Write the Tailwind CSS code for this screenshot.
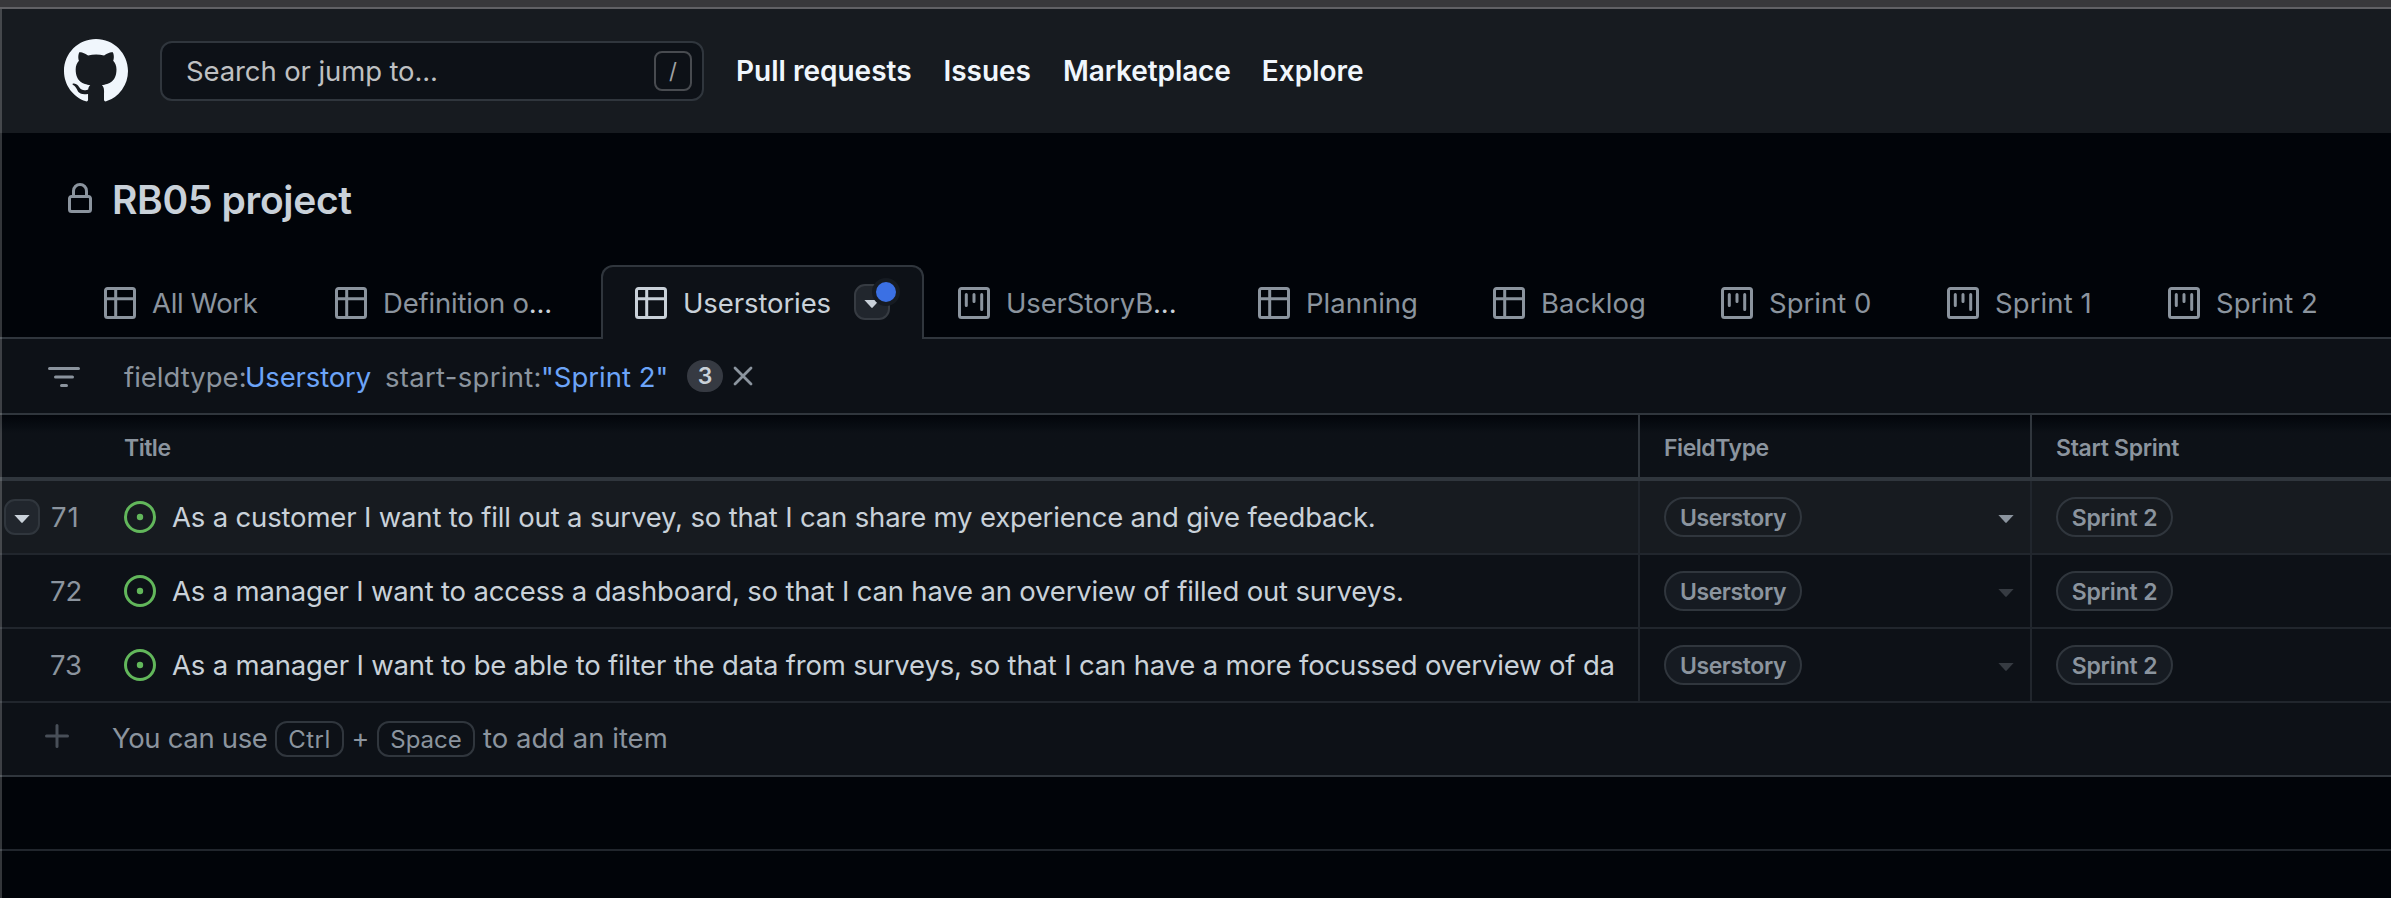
<!DOCTYPE html>
<html lang="en">
<head>
<meta charset="utf-8">
<title>RB05 project</title>
<script src="https://cdn.jsdelivr.net/npm/@tailwindcss/browser@4"></script>
</head>
<body class="relative w-[2391px] h-[898px] overflow-hidden bg-[#010409] font-['Inter','Liberation_Sans',sans-serif] text-[27.5px] leading-[40px] text-[#c9d1d9] whitespace-nowrap">
<svg class="hidden">
  <symbol id="table" viewBox="0 0 32 32"><path d="M3.5 1.5h25a2 2 0 0 1 2 2v25a2 2 0 0 1-2 2h-25a2 2 0 0 1-2-2v-25a2 2 0 0 1 2-2zM1.5 11.7h29M11.7 1.5v29" fill="none" stroke="currentColor" stroke-width="3"/></symbol>
  <symbol id="board" viewBox="0 0 32 32"><path d="M3.5 1.5h25a2 2 0 0 1 2 2v25a2 2 0 0 1-2 2h-25a2 2 0 0 1-2-2v-25a2 2 0 0 1 2-2zM8.3 7.5v11M16 7.5v7M23.7 7.5v15" fill="none" stroke="currentColor" stroke-width="3" stroke-linecap="round"/></symbol>
  <symbol id="issue" viewBox="0 0 32 32"><circle cx="16" cy="16" r="14.5" fill="none" stroke="currentColor" stroke-width="3"/><circle cx="16" cy="16" r="3.2" fill="currentColor"/></symbol>
  <symbol id="caret" viewBox="0 0 16 8"><path d="M.4 0h15.2L8.7 7.6a1 1 0 0 1-1.4 0z" fill="currentColor"/></symbol>
</svg>

<!-- window edge -->
<div class="h-[9px] bg-[#38383b] border-b-2 border-[#616165]"></div>
<div class="absolute left-0 top-[9px] bottom-0 w-[2px] bg-white/20 z-10"></div>

<header class="flex items-center h-[124px] pl-16 bg-[#171b20] text-[28px] font-semibold text-[#f0f6fc]">
  <svg class="w-16 h-16 shrink-0" viewBox="0 0 16 16" fill="currentColor"><path d="M8 0C3.58 0 0 3.58 0 8c0 3.54 2.29 6.53 5.47 7.59.4.07.55-.17.55-.38 0-.19-.01-.82-.01-1.49-2.01.37-2.53-.49-2.69-.94-.09-.23-.48-.94-.82-1.13-.28-.15-.68-.52-.01-.53.63-.01 1.08.58 1.23.82.72 1.21 1.87.87 2.33.66.07-.52.28-.87.51-1.07-1.78-.2-3.64-.89-3.64-3.95 0-.87.31-1.59.82-2.15-.08-.2-.36-1.02.08-2.12 0 0 .67-.21 2.2.82.64-.18 1.32-.27 2-.27.68 0 1.36.09 2 .27 1.53-1.04 2.2-.82 2.2-.82.44 1.1.16 1.92.08 2.12.51.56.82 1.27.82 2.15 0 3.07-1.87 3.75-3.65 3.95.29.25.54.73.54 1.48 0 1.07-.01 1.93-.01 2.2 0 .21.15.46.55.38A8.013 8.013 0 0016 8c0-4.42-3.58-8-8-8z"/></svg>
  <div class="flex items-center justify-between ml-8 w-[544px] h-[60px] rounded-xl border-2 border-[#30363d] bg-[#0d1117] pl-6 pr-[10px] text-[27.5px] font-normal text-[#bfc0c2] tracking-[-0.11px]">
    <span>Search or jump to...</span>
    <span class="flex items-center justify-center w-[38px] h-10 rounded-lg border-2 border-[#484b50] text-[22px] text-[#a0a1a3]">/</span>
  </div>
  <nav class="flex ml-8 gap-8">
    <a>Pull requests</a><a class="tracking-[-0.04px]">Issues</a><a class="tracking-[-0.1px]">Marketplace</a><a class="-ml-[1px]">Explore</a>
  </nav>
</header>

<div class="flex items-center h-[132px] pl-16 gap-4 text-[39px] font-semibold tracking-[-0.33px]">
  <svg class="w-8 h-8 text-[#8b949e]" viewBox="0 0 16 16" fill="currentColor"><path d="M4 4a4 4 0 018 0v2h.25c.966 0 1.75.784 1.75 1.75v5.5A1.75 1.75 0 0112.25 15h-8.5A1.75 1.75 0 012 13.25v-5.5C2 6.784 2.784 6 3.75 6H4V4zm8.25 3.5h-8.5a.25.25 0 00-.25.25v5.5c0 .138.112.25.25.25h8.5a.25.25 0 00.25-.25v-5.5a.25.25 0 00-.25-.25zM10.5 6V4a2.5 2.5 0 10-5 0v2h5z"/></svg>
  <h1 class="pt-[2px]">RB05 project</h1>
</div>

<div class="flex h-[74px] text-[#8b949e]">
  <div class="w-[70px] border-b-2 border-[#30363d]"></div>
  <div class="flex items-center gap-4 w-[231px] pl-[34px] border-b-2 border-[#30363d] pt-[3px]"><svg class="w-8 h-8"><use href="#table"/></svg><span class="tracking-[-0.31px]">All Work</span></div>
  <div class="flex items-center gap-4 w-[300px] pl-[34px] border-b-2 border-[#30363d] pt-[3px]"><svg class="w-8 h-8"><use href="#table"/></svg><span class="tracking-[-0.2px]">Definition o<span class="text-[#c9d1d9]">...</span></span></div>
  <div class="flex items-center gap-4 w-[323px] pl-8 border-2 border-b-0 border-[#30363d] rounded-t-xl bg-[#0d1117] text-[#c9d1d9]"><svg class="w-8 h-8"><use href="#table"/></svg><span class="tracking-[-0.1px]">Userstories</span>
    <div class="relative flex items-center justify-center ml-[7px] -mt-[3px] w-9 h-9 rounded-[11px] border-2 border-[#363b42] bg-[#21262d]"><svg class="w-4 h-2 mt-1"><use href="#caret"/></svg><span class="absolute -top-2 left-4 w-7 h-7 rounded-full border-4 border-[#161b22] bg-[#3b70e4]"></span></div>
  </div>
  <div class="flex items-center gap-4 w-[300px] pl-[34px] border-b-2 border-[#30363d] pt-[3px]"><svg class="w-8 h-8"><use href="#board"/></svg><span class="tracking-[-0.15px]">UserStoryB<span class="text-[#c9d1d9]">...</span></span></div>
  <div class="flex items-center gap-4 w-[235px] pl-[34px] border-b-2 border-[#30363d] pt-[3px]"><svg class="w-8 h-8"><use href="#table"/></svg><span>Planning</span></div>
  <div class="flex items-center gap-4 w-[228px] pl-[34px] border-b-2 border-[#30363d] pt-[3px]"><svg class="w-8 h-8"><use href="#table"/></svg><span class="tracking-[0.1px]">Backlog</span></div>
  <div class="flex items-center gap-4 w-[226px] pl-[34px] border-b-2 border-[#30363d] pt-[3px]"><svg class="w-8 h-8"><use href="#board"/></svg><span>Sprint 0</span></div>
  <div class="flex items-center gap-4 w-[221px] pl-[34px] border-b-2 border-[#30363d] pt-[3px]"><svg class="w-8 h-8"><use href="#board"/></svg><span class="tracking-[0.1px]">Sprint 1</span></div>
  <div class="flex items-center gap-4 flex-1 pl-[34px] border-b-2 border-[#30363d] pt-[3px]"><svg class="w-8 h-8"><use href="#board"/></svg><span>Sprint 2</span></div>
</div>

<div class="flex items-center h-[76px] pl-12 bg-[#0d1117] border-b-2 border-[#30363d] text-[#8b949e]">
  <svg class="w-8 h-5 mt-[2px]" viewBox="0 0 32 20" fill="none" stroke="currentColor" stroke-width="3" stroke-linecap="round"><path d="M1.5 1.5h29M7.5 10h17M13.5 18.5h5"/></svg>
  <div class="flex ml-11 pt-[2px]">
    <div class="w-[117px]">fieldtype:</div>
    <div class="ml-[4px] w-[140px] text-[#6ca4f8] tracking-[-0.15px]">Userstory</div>
    <div class="w-[156px] tracking-[0.3px]">start-sprint:</div>
    <div class="w-[146px] text-[#6ca4f8]">"Sprint 2"</div>
  </div>
  <div class="flex items-center justify-center w-9 h-8 rounded-full bg-[#363a42] text-[23px] font-semibold text-[#c9d1d9]">3</div>
  <svg class="ml-[10px] w-5 h-5" viewBox="0 0 20 20" fill="none" stroke="currentColor" stroke-width="2.8" stroke-linecap="round"><path d="M2 2l16 16M18 2L2 18"/></svg>
</div>

<div class="grid grid-cols-[1640px_392px_1fr] h-[66px] border-b-4 border-[#30363d] bg-[#0d1117] bg-linear-to-b from-[#03060b] to-[#0d1117] to-[18px] text-[23px] font-semibold text-[#8b949e]">
  <div class="flex items-center pt-[3px] pl-[124px] border-r-2 border-[#30363d] tracking-[-0.5px]">Title</div>
  <div class="flex items-center pt-[3px] pl-6 border-r-2 border-[#30363d] tracking-[-0.45px]">FieldType</div>
  <div class="flex items-center pt-[3px] pl-6 tracking-[-0.3px]">Start Sprint</div>
</div>

<div class="grid grid-cols-[1640px_392px_1fr] h-[74px] border-b-2 border-[#21262d] bg-[#171b20]">
  <div class="flex items-center pl-1 pr-[23px] border-r-2 border-[#21262d]">
    <div class="flex items-center justify-center shrink-0 w-9 h-9 rounded-[11px] border-2 border-[#30363d] bg-[#21262d]"><svg class="w-4 h-2 mt-1"><use href="#caret"/></svg></div>
    <span class="shrink-0 w-[52px] ml-[10px] mr-[22px] pl-[1px] text-[#8b949e] tracking-[1px]">71</span>
    <svg class="shrink-0 w-8 h-8 text-[#62b75b]"><use href="#issue"/></svg>
    <span class="ml-4 tracking-[-0.17px] overflow-hidden">As a customer I want to fill out a survey, so that I can share my experience and give feedback.</span>
  </div>
  <div class="flex items-center justify-between pl-6 pr-4 border-r-2 border-[#21262d]">
    <span class="flex items-center justify-center w-[138px] h-10 pt-[1px] rounded-full border-2 border-[#30363d] text-[23px] font-semibold text-[#8b949e] tracking-[-0.4px]">Userstory</span>
    <svg class="w-4 h-2 mt-1 text-[#8b949e]"><use href="#caret"/></svg>
  </div>
  <div class="flex items-center pl-6"><span class="flex items-center justify-center w-[117px] h-10 pt-[1px] rounded-full border-2 border-[#30363d] text-[23px] font-semibold text-[#8b949e] tracking-[-0.16px]">Sprint 2</span></div>
</div>

<div class="grid grid-cols-[1640px_392px_1fr] h-[74px] border-b-2 border-[#21262d] bg-[#0d1117]">
  <div class="flex items-center pl-[50px] pr-[23px] border-r-2 border-[#21262d]">
    <span class="shrink-0 w-[52px] mr-[22px] text-[#8b949e]">72</span>
    <svg class="shrink-0 w-8 h-8 text-[#62b75b]"><use href="#issue"/></svg>
    <span class="ml-4 tracking-[-0.18px] overflow-hidden">As a manager I want to access a dashboard, so that I can have an overview of filled out surveys.</span>
  </div>
  <div class="flex items-center justify-between pl-6 pr-4 border-r-2 border-[#21262d]">
    <span class="flex items-center justify-center w-[138px] h-10 pt-[1px] rounded-full border-2 border-[#30363d] bg-[#161b22] text-[23px] font-semibold text-[#8b949e] tracking-[-0.4px]">Userstory</span>
    <svg class="w-4 h-2 mt-1 text-[#363b42]"><use href="#caret"/></svg>
  </div>
  <div class="flex items-center pl-6"><span class="flex items-center justify-center w-[117px] h-10 pt-[1px] rounded-full border-2 border-[#30363d] bg-[#161b22] text-[23px] font-semibold text-[#8b949e] tracking-[-0.16px]">Sprint 2</span></div>
</div>

<div class="grid grid-cols-[1640px_392px_1fr] h-[74px] border-b-2 border-[#21262d] bg-[#0d1117]">
  <div class="flex items-center min-w-0 pl-[50px] pr-[22px] border-r-2 border-[#21262d]">
    <span class="shrink-0 w-[52px] mr-[22px] text-[#8b949e]">73</span>
    <svg class="shrink-0 w-8 h-8 text-[#62b75b]"><use href="#issue"/></svg>
    <span class="ml-4 min-w-0 tracking-[-0.17px] overflow-hidden">As a manager I want to be able to filter the data from surveys, so that I can have a more focussed overview of da</span>
  </div>
  <div class="flex items-center justify-between pl-6 pr-4 border-r-2 border-[#21262d]">
    <span class="flex items-center justify-center w-[138px] h-10 pt-[1px] rounded-full border-2 border-[#30363d] bg-[#161b22] text-[23px] font-semibold text-[#8b949e] tracking-[-0.4px]">Userstory</span>
    <svg class="w-4 h-2 mt-1 text-[#363b42]"><use href="#caret"/></svg>
  </div>
  <div class="flex items-center pl-6"><span class="flex items-center justify-center w-[117px] h-10 pt-[1px] rounded-full border-2 border-[#30363d] bg-[#161b22] text-[23px] font-semibold text-[#8b949e] tracking-[-0.16px]">Sprint 2</span></div>
</div>

<div class="flex items-center h-[74px] pl-[45px] bg-[#0d1117] border-b-2 border-[#30363d] text-[#8b949e]">
  <svg class="w-6 h-6 mb-[7px] text-[#484f58]" viewBox="0 0 24 24" fill="none" stroke="currentColor" stroke-width="3" stroke-linecap="round"><path d="M12 1.5v21M1.5 12h21"/></svg>
  <span class="ml-[43px] w-[163px] pb-[2px] tracking-[-0.34px]">You can use</span>
  <kbd class="flex items-center justify-center w-[69px] h-9 pt-[2px] rounded-xl border-2 border-[#30363d] font-['Inter'] text-[24px] tracking-[0.5px]">Ctrl</kbd>
  <span class="w-[33px] text-center text-[27px]">+</span>
  <kbd class="flex items-center justify-center w-[98px] h-9 pt-[2px] rounded-xl border-2 border-[#30363d] font-['Inter'] text-[24px]">Space</kbd>
  <span class="ml-2 pb-[2px]">to add an item</span>
</div>
<div class="h-[74px] border-b-2 border-[#21262d]"></div>
</body>
</html>
